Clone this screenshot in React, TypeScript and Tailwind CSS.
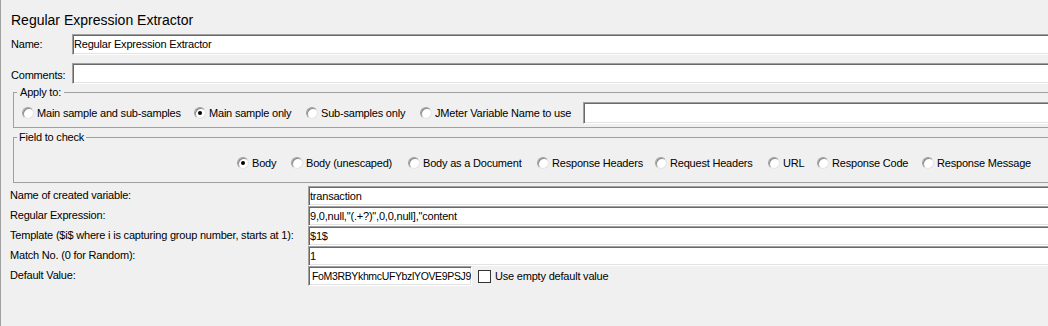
import React from "react";

function Radio({ checked }: { checked?: boolean }) {
  return (
    <span className="flex h-[12px] w-[12px] shrink-0 items-center justify-center rounded-full border border-[#a0a0a0] border-b-[#e3e3e3] border-r-[#e3e3e3] bg-white shadow-[inset_1px_1px_0_#8a8a8a]">
      {checked && <span className="h-[4px] w-[4px] rounded-full bg-black" />}
    </span>
  );
}

function RadioItem({ label, checked, w }: { label: string; checked?: boolean; w: string }) {
  return (
    <div className={`flex shrink-0 items-center gap-[3px] whitespace-nowrap ${w}`}>
      <Radio checked={checked} />
      <span>{label}</span>
    </div>
  );
}

function Field({ value, className = "", textClass = "" }: { value?: string; className?: string; textClass?: string }) {
  return (
    <div
      className={`flex items-center overflow-hidden whitespace-nowrap border border-[#a0a0a0] border-b-white border-r-white bg-white pl-[1px] shadow-[inset_1px_1px_0_#696969,inset_-1px_-1px_0_#e3e3e3] ${className}`}
    >
      {value && <span className={`shrink-0 ${textClass}`}>{value}</span>}
    </div>
  );
}

export default function App() {
  const rows = [
    { label: "Name of created variable:", value: "transaction" },
    { label: "Regular Expression:", value: '9,0,null,"(.+?)",0,0,null],"content' },
    { label: "Template ($i$ where i is capturing group number, starts at 1):", value: "$1$" },
    { label: "Match No. (0 for Random):", value: "1" },
  ];
  return (
    <div className="h-[326px] w-[1048px] overflow-hidden border-l border-[#a0a0a0] bg-[#f0f0f0] font-['Liberation_Sans',Arial,sans-serif] text-[11px] leading-[13px] tracking-[-0.2px] text-black">
      <div className="flex w-[1090px] flex-col">
        <div className="mt-[10px] h-[20px] pl-[10px] text-[14px] leading-[20px] tracking-normal">
          Regular Expression Extractor
        </div>

        <div className="mt-[4px] flex h-[21px] items-center pl-[10px]">
          <div className="w-[61px]">Name:</div>
          <Field value="Regular Expression Extractor" className="h-[21px] flex-1" />
        </div>

        <div className="mt-[8px] flex h-[21px] pl-[10px]">
          <div className="w-[61px] pt-[6px]">Comments:</div>
          <Field className="h-[21px] flex-1" />
        </div>

        <fieldset className="mt-[2px] ml-[12px] border border-[#a0a0a0] pt-[3px] pb-[3px]">
          <legend className="ml-[3px] px-[3px] leading-[13px]">Apply to:</legend>
          <div className="flex h-[22px] items-center pl-[8px]">
            <RadioItem label="Main sample and sub-samples" w="w-[172px]" />
            <RadioItem label="Main sample only" checked w="w-[112px]" />
            <RadioItem label="Sub-samples only" w="w-[114px]" />
            <RadioItem label="JMeter Variable Name to use" w="w-[163px]" />
            <Field className="h-[22px] flex-1" />
          </div>
        </fieldset>

        <fieldset className="mt-[3px] ml-[12px] border border-[#a0a0a0] pt-[12px] pb-[12px]">
          <legend className="ml-[3px] px-[2px] leading-[13px]">Field to check</legend>
          <div className="flex h-[14px] items-center pl-[223px]">
            <RadioItem label="Body" checked w="w-[54px]" />
            <RadioItem label="Body (unescaped)" w="w-[117px]" />
            <RadioItem label="Body as a Document" w="w-[129px]" />
            <RadioItem label="Response Headers" w="w-[118px]" />
            <RadioItem label="Request Headers" w="w-[113px]" />
            <RadioItem label="URL" w="w-[49px]" />
            <RadioItem label="Response Code" w="w-[105px]" />
            <RadioItem label="Response Message" w="w-[130px]" />
          </div>
        </fieldset>

        <div className="mt-[3px] flex flex-col pl-[9px]">
          {rows.map((r) => (
            <div key={r.label} className="flex h-[20px] items-center">
              <div className="w-[298px] shrink-0 whitespace-nowrap pb-[1px]">{r.label}</div>
              <Field value={r.value} className="h-[20px] flex-1" />
            </div>
          ))}
          <div className="flex h-[20px] items-center">
            <div className="w-[298px] shrink-0 whitespace-nowrap pb-[1px]">Default Value:</div>
            <Field
              value="FoM3RBYkhmcUFYbzlYOVE9PSJ9"
              className="h-[20px] w-[164px] pl-[3px]"
              textClass="text-[10.5px] tracking-[-0.35px]"
            />
            <span className="ml-[6px] h-[13px] w-[13px] shrink-0 border border-[#333333] bg-white" />
            <span className="ml-[4px] whitespace-nowrap">Use empty default value</span>
          </div>
        </div>
      </div>
    </div>
  );
}
